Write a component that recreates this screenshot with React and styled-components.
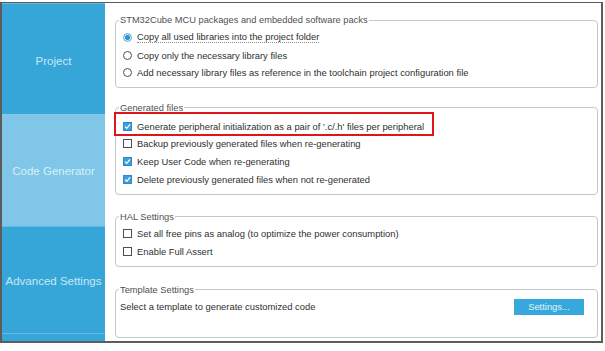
import React from "react";
import styled, { createGlobalStyle } from "styled-components";

const GlobalStyle = createGlobalStyle`
  body {
    margin: 0;
    background: #ffffff;
    font-family: "Liberation Sans", Arial, sans-serif;
  }
`;

function Settings() {
  return (
    <>
      <GlobalStyle />
      <Frame>
        <Sidebar>
          <NavItem $height={111} $shift={4}>
            Project
          </NavItem>
          <NavItem $height={112} $active>
            Code Generator
          </NavItem>
          <NavItem $height={107} $shift={2}>
            Advanced Settings
          </NavItem>
          <NavFooter />
        </Sidebar>

        <Content>
          <Group $gap={15}>
            <Legend>STM32Cube MCU packages and embedded software packs</Legend>
            <GroupBody $pad="3.5px 0 5.4px 7px">
              <Row>
                <Radio $on />
                <Focused>Copy all used libraries into the project folder</Focused>
              </Row>
              <Row>
                <Radio />
                Copy only the necessary library files
              </Row>
              <Row>
                <Radio />
                Add necessary library files as reference in the toolchain project
                configuration file
              </Row>
            </GroupBody>
          </Group>

          <Group $gap={17}>
            <Legend>Generated files</Legend>
            <GroupBody $pad="4.5px 0 5.7px 7px">
              <Row>
                <Highlight />
                <Check $on />
                Generate peripheral initialization as a pair of '.c/.h' files per
                peripheral
              </Row>
              <Row>
                <Check />
                Backup previously generated files when re-generating
              </Row>
              <Row>
                <Check $on />
                Keep User Code when re-generating
              </Row>
              <Row>
                <Check $on />
                Delete previously generated files when not re-generated
              </Row>
            </GroupBody>
          </Group>

          <Group $gap={18}>
            <Legend>HAL Settings</Legend>
            <GroupBody $pad="3px 0 5.6px 7px">
              <Row>
                <Check />
                Set all free pins as analog (to optimize the power consumption)
              </Row>
              <Row>
                <Check />
                Enable Full Assert
              </Row>
            </GroupBody>
          </Group>

          <Group $gap={0}>
            <Legend>Template Settings</Legend>
            <GroupBody $pad="3px 0 21.3px 4px">
              <TemplateRow>
                Select a template to generate customized code
                <Button>Settings...</Button>
              </TemplateRow>
            </GroupBody>
          </Group>
        </Content>
      </Frame>
    </>
  );
}

function Check({ $on }) {
  return (
    <CheckBox $on={$on}>
      {$on && (
        <svg width="7" height="7" viewBox="0 0 7 7">
          <path
            d="M1 3.6 L2.8 5.3 L6 1.4"
            fill="none"
            stroke="#ffffff"
            strokeWidth="1.3"
          />
        </svg>
      )}
    </CheckBox>
  );
}

export default Settings;

const Frame = styled.div`
  margin-top: 2px;
  width: 603px;
  height: 341px;
  box-sizing: border-box;
  border: 2px solid #5c5c5c;
  border-top-width: 1px;
  display: flex;
`;

const Sidebar = styled.div`
  width: 103px;
  display: flex;
  flex-direction: column;
  background: #36a6d9;
`;

const NavItem = styled.div`
  height: ${(p) => p.$height}px;
  box-sizing: border-box;
  padding-top: ${(p) => p.$shift || 0}px;
  border-top: 1px solid ${(p) => (p.$active ? "#86caea" : "#62bae3")};
  background: ${(p) => (p.$active ? "#80c6e8" : "#36a6d9")};
  color: ${(p) => (p.$active ? "#d9eff9" : "#c8e6f5")};
  font-size: 11.5px;
  display: flex;
  align-items: center;
  justify-content: center;
  white-space: nowrap;
`;

const NavFooter = styled.div`
  flex: 1;
  border-top: 1px solid #62bae3;
`;

const Content = styled.div`
  flex: 1;
  padding: 12px 3px 0 10px;
  display: flex;
  flex-direction: column;
`;

const Group = styled.fieldset`
  margin: 0 0 ${(p) => p.$gap}px;
  padding: 0;
  min-width: 0;
  border: 1px solid #c4c8cc;
  border-radius: 4px;
`;

const Legend = styled.legend`
  margin-left: 3px;
  padding: 0 1px;
  font-size: 9.3px;
  line-height: 10px;
  color: #505050;
`;

const GroupBody = styled.div`
  padding: ${(p) => p.$pad};
`;

const Row = styled.div`
  position: relative;
  display: flex;
  align-items: center;
  gap: 5px;
  height: 17.7px;
  font-size: 9.4px;
  color: #2f2f2f;
  white-space: nowrap;
`;

const TemplateRow = styled(Row)`
  justify-content: space-between;
`;

const Focused = styled.span`
  border-bottom: 1px dotted #8a8a8a;
  line-height: 10px;
`;

const Highlight = styled.div`
  position: absolute;
  left: -9px;
  top: -5px;
  width: 320px;
  height: 24px;
  box-sizing: border-box;
  border: 2px solid #e0141b;
  pointer-events: none;
`;

const CheckBox = styled.span`
  width: 9px;
  height: 9px;
  flex: none;
  box-sizing: border-box;
  border: 1px solid ${(p) => (p.$on ? "#2b8ccb" : "#4f4f4f")};
  background: ${(p) => (p.$on ? "#3d9edb" : "#ffffff")};
  display: grid;
  place-items: center;
`;

const Radio = styled.span`
  width: 9px;
  height: 9px;
  flex: none;
  box-sizing: border-box;
  border-radius: 50%;
  border: 1px solid ${(p) => (p.$on ? "#5aaee0" : "#4f4f4f")};
  background: ${(p) =>
    p.$on
      ? "radial-gradient(circle, #2f93d4 0 2.2px, #cfe8f6 2.6px)"
      : "#ffffff"};
`;

const Button = styled.button`
  width: 70px;
  height: 16px;
  margin-right: 13px;
  padding: 0;
  border: none;
  background: #37a8dc;
  color: #e2f3fb;
  font-family: inherit;
  font-size: 9.4px;
`;
